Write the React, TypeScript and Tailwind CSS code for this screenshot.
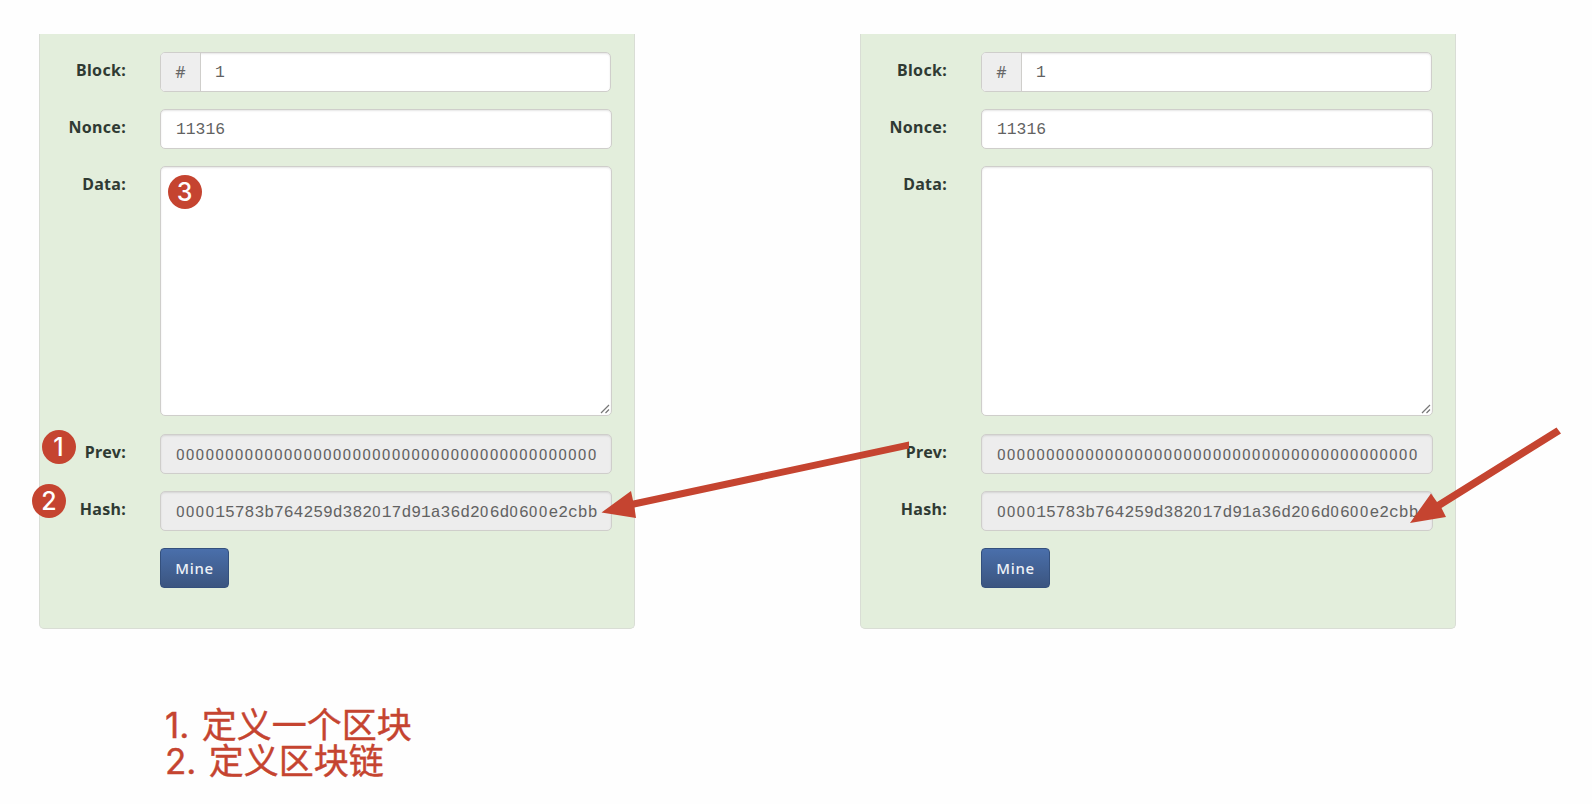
import type { ReactNode } from "react";

const PREV = "0".repeat(43);
const HASH = "000015783b764259d382017d91a36d206d0600e2cbb";

const inset = "shadow-[inset_0_1px_2px_rgba(0,0,0,0.1)]";
const box = "rounded-[5px] border border-[#cfcecb]";

/* Zeros are set in a face without the inner dot, spaced to the mono advance. */
function Mono({ text }: { text: string }) {
  return (
    <span className="whitespace-pre font-['Liberation_Mono',monospace] text-[16.33px] leading-[20px] text-[#626262]">
      {text.split(/(0+)/).filter(Boolean).map((run, i) =>
        run[0] === "0" ? (
          <span key={i} className="font-['Roboto',sans-serif] text-[15.5px] tracking-[1.09px]">
            {run}
          </span>
        ) : (
          <span key={i}>{run}</span>
        ),
      )}
    </span>
  );
}

function Row({ label, children }: { label: string; children: ReactNode }) {
  return (
    <div className="flex">
      <div className="w-[86px] shrink-0 pt-[6px] text-right text-[16px] leading-[24px] font-bold tracking-[0.3px] text-[#2f3a33]">
        {label}
      </div>
      <div className="ml-[34px] w-[452px]">{children}</div>
    </div>
  );
}

function Field({ text, readOnly }: { text: string; readOnly?: boolean }) {
  return (
    <div className={`flex h-[40px] items-center pt-[3px] pl-[15px] ${box} ${inset} ${readOnly ? "bg-[#ededed]" : "bg-white"}`}>
      <Mono text={text} />
    </div>
  );
}

function BlockPanel() {
  return (
    <section className="flex h-[595px] w-[596px] flex-col gap-[17.2px] rounded-b-[5px] border border-t-0 border-[#d9ddd5] bg-[#e3eedc] pt-[17.5px] font-['Noto_Sans',sans-serif]">
      <Row label="Block:">
        <div className={`flex h-[40px] w-[451px] overflow-hidden bg-white ${box} ${inset}`}>
          <div className="flex w-[40px] items-center justify-center border-r border-[#cfcecb] bg-[#eeeeee] text-[16px] text-[#666]">
            #
          </div>
          <div className="flex items-center pt-[3px] pl-[14px]">
            <Mono text="1" />
          </div>
        </div>
      </Row>
      <Row label="Nonce:">
        <Field text="11316" />
      </Row>
      <Row label="Data:">
        <div className={`flex h-[250.5px] items-end justify-end bg-white p-px ${box} ${inset}`}>
          <svg width="10" height="10" viewBox="0 0 10 10" stroke="#777" strokeWidth="1.2">
            <path d="M1 9 9 1M5.5 9 9 5.5" />
          </svg>
        </div>
      </Row>
      <Row label="Prev:">
        <Field text={PREV} readOnly />
      </Row>
      <Row label="Hash:">
        <Field text={HASH} readOnly />
      </Row>
      <Row label="">
        <button className="h-[40px] w-[69px] rounded-[4px] border border-[#34507d] bg-linear-to-b from-[#4a6fab] to-[#3b5580] text-[15px] font-medium tracking-[0.7px] text-[#eef2f8]">
          Mine
        </button>
      </Row>
    </section>
  );
}

function Badge({ n, className }: { n: number; className: string }) {
  return (
    <div className={`absolute flex size-[34px] items-center justify-center rounded-full bg-[#c54430] pt-px font-['Inter',sans-serif] text-[25px] leading-none font-medium text-white ${className}`}>
      {n}
    </div>
  );
}

export default function App() {
  return (
    <main className="relative h-[804px] w-[1592px] overflow-hidden bg-[#fefefe]">
      <div className="flex gap-[225px] pt-[34px] pl-[39px]">
        <BlockPanel />
        <BlockPanel />
      </div>

      <div className="pt-[77.5px] pl-[165px] font-['Inter','Noto_Sans_CJK_SC',sans-serif] text-[35px] leading-[36.5px] [word-spacing:2.5px] text-[#c54430] [-webkit-text-stroke:0.4px_#c54430]">
        <p>1. 定义一个区块</p>
        <p>2. 定义区块链</p>
      </div>

      <Badge n={3} className="top-[175px] left-[167.5px]" />
      <Badge n={1} className="top-[429.5px] left-[41.5px]" />
      <Badge n={2} className="top-[484px] left-[32px]" />

      <svg className="absolute inset-0" width="1592" height="804" fill="#c54430">
        <path d="M601.5 512.5 631 491 633 500.5 909 441.5V448.5L634.5 507.5 636 518Z" />
        <path d="M1410 523 1431 493.5 1437 502 1556.5 427.5 1561 433.5 1441.5 508 1446 517Z" />
      </svg>
    </main>
  );
}
